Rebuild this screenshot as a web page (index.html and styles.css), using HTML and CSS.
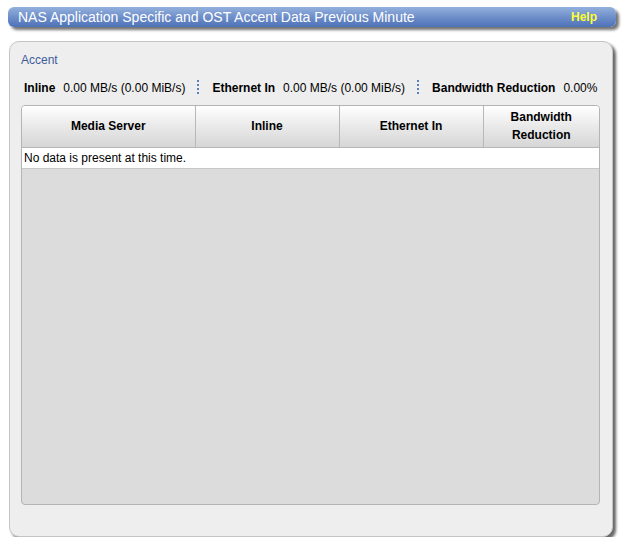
FILE: index.html
```html
<!DOCTYPE html>
<html>
<head>
<meta charset="utf-8">
<link rel="stylesheet" href="styles.css">
</head>
<body>
<div class="titlebar">
  <span class="title">NAS Application Specific and OST Accent Data Previous Minute</span>
  <span class="help">Help</span>
</div>
<div class="panel">
  <div class="section">Accent</div>
  <div class="stats">
    <span class="label">Inline</span><span class="value">0.00 MB/s (0.00 MiB/s)</span>
    <span class="sep"></span>
    <span class="label">Ethernet In</span><span class="value">0.00 MB/s (0.00 MiB/s)</span>
    <span class="sep"></span>
    <span class="label">Bandwidth Reduction</span><span class="value">0.00%</span>
  </div>
  <div class="tablebox">
    <table class="grid">
      <thead>
        <tr>
          <th class="c1">Media Server</th>
          <th class="c2">Inline</th>
          <th class="c3">Ethernet In</th>
          <th class="c4">Bandwidth<br>Reduction</th>
        </tr>
      </thead>
      <tbody>
        <tr><td colspan="4">No data is present at this time.</td></tr>
      </tbody>
    </table>
  </div>
</div>
</body>
</html>
```
FILE: styles.css
```css
html, body {
  margin: 0;
  padding: 0;
  background: #ffffff;
  font-family: "Liberation Sans", Arial, sans-serif;
}
.titlebar {
  margin: 7px 9px 0 8px;
  height: 20px;
  border-radius: 6px;
  background: linear-gradient(#93b0dc, #6f8fca 50%, #4d72b7);
  box-shadow: 3px 3px 3px rgba(0,0,0,0.55);
  display: flex;
  align-items: center;
  justify-content: space-between;
  padding: 0 19px 0 10px;
  box-sizing: border-box;
}
.title {
  color: #ffffff;
  font-size: 14px;
}
.help {
  color: #ffff33;
  font-size: 12px;
  font-weight: bold;
}
.panel {
  margin: 14px 0 0 9px;
  width: 604px;
  height: 496px;
  box-sizing: border-box;
  background: #eeeeee;
  border: 1px solid #c4c4c4;
  border-radius: 10px;
  box-shadow: 3px 3px 3px rgba(0,0,0,0.6);
  padding: 11px 11px 0 11px;
}
.section {
  color: #3c5d9c;
  font-size: 12px;
  line-height: 14px;
}
.stats {
  display: flex;
  align-items: center;
  margin-top: 13px;
  padding-left: 3px;
  font-size: 12px;
  line-height: 14px;
  color: #000;
  white-space: nowrap;
}
.stats > span {
  flex-shrink: 0;
}
.label {
  font-weight: bold;
  margin-right: 8px;
}
.sep {
  width: 2px;
  height: 15px;
  margin: 0 13px 0 12px;
  background: repeating-linear-gradient(#5a7fc0 0 2px, transparent 2px 4px);
}
.tablebox {
  margin-top: 10px;
  width: 579px;
  height: 400px;
  box-sizing: border-box;
  background: #dcdcdc;
  border: 1px solid #b4b4b4;
  border-radius: 4px;
  overflow: hidden;
}
.grid {
  width: 100%;
  border-collapse: collapse;
  font-size: 12px;
}
.grid th {
  height: 41px;
  padding: 0;
  font-weight: bold;
  line-height: 18px;
  color: #000;
  background: linear-gradient(#ffffff, #e9e9e9 50%, #d6d6d6);
  border-left: 1px solid #b8b8b8;
  border-bottom: 1px solid #b8b8b8;
  box-sizing: border-box;
}
.grid th.c1 { border-left: none; width: 173px; }
.grid th.c2 { width: 144px; }
.grid th.c3 { width: 144px; }
.grid td {
  background: #ffffff;
  height: 20px;
  padding: 0 0 0 2px;
  border-bottom: 1px solid #c8c8c8;
  color: #000;
  line-height: 18px;
}
```
